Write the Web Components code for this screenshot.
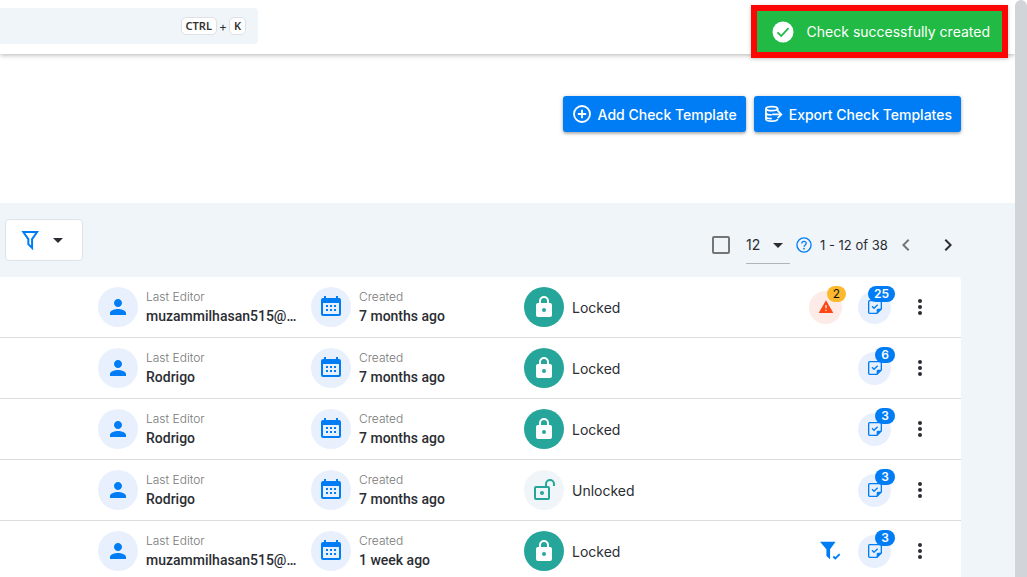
<!DOCTYPE html>
<html lang="en">
<head>
<meta charset="utf-8">
<title>Check Templates</title>
<style>
  html, body { margin: 0; height: 100%; }
  body {
    --blue: #007df5;
    --teal: #26a69a;
    --mist: #f0f5fa;
    --ink: #2b2d33;
    font-family: Inter, sans-serif;
    font-size: 14px;
    color: var(--ink);
    background: #fff;
    overflow: hidden;
  }
</style>
</head>
<body>
<check-app></check-app>

<script>
const ICONS = {
  plus: '<circle cx="12" cy="12" r="9.6" fill="none" stroke="currentColor" stroke-width="2.2"/><path d="M12 7v10M7 12h10" stroke="currentColor" stroke-width="2.2" fill="none"/>',
  export: '<g fill="none" stroke="currentColor" stroke-width="2.1"><ellipse cx="10.500" cy="5.500" rx="7" ry="2.500"/><path d="M3.500 5.500v5c0 1.400 3 2.500 7 2.500M3.500 10.500V15c0 1.400 3 2.500 7 2.500M3.500 15v3c0 1.400 3 2.500 7 2.500s7-1.100 7-2.500M17.500 5.500V8"/><path d="M11 12.500h11M17.500 8l4.500 4.500-4.500 4.500"/></g>',
  check: '<circle cx="12" cy="12" r="10.500" fill="#fff"/><path d="M6.500 12.300l3.700 3.700 7.300-7.800" fill="none" stroke="#21ba45" stroke-width="1.800"/>',
  funnel: '<path d="M4 2.500h16.500L14.500 11v10.500L10 17v-6z" fill="none" stroke="currentColor" stroke-width="2.400"/>',
  funnelCheck: '<path d="M0 2h17l-6 8V21l-4-3.500V10z" fill="currentColor"/><path d="M14.500 18l2.200 2.200L21.500 15.500" fill="none" stroke="currentColor" stroke-width="2"/>',
  caret: '<path d="M7 10l5 5 5-5z" fill="currentColor"/>',
  help: '<circle cx="12" cy="12" r="10.600" fill="none" stroke="currentColor" stroke-width="2"/><path d="M8.800 9.800c0-4.300 6.600-4 6.600-.3 0 2.500-3.300 2.500-3.300 5.200" fill="none" stroke="currentColor" stroke-width="2"/><circle cx="12.100" cy="17.600" r="1.300" fill="currentColor"/>',
  left: '<path d="M15.400 7.400L14 6l-6 6 6 6 1.400-1.400-4.600-4.600z" fill="currentColor"/>',
  right: '<path d="M10 6L8.600 7.400l4.600 4.600-4.600 4.600L10 18l6-6z" fill="currentColor"/>',
  person: '<path d="M12 12c2.200 0 4-1.800 4-4s-1.800-4-4-4-4 1.800-4 4 1.800 4 4 4zm0 2c-2.700 0-8 1.300-8 4v2h16v-2c0-2.700-5.300-4-8-4z" fill="currentColor"/>',
  calendar: '<path d="M5 3V1h2v2h10V1h2v2h1a2 2 0 0 1 2 2v14a2 2 0 0 1-2 2H4a2 2 0 0 1-2-2V5a2 2 0 0 1 2-2zM4 8v11h16V8z" fill="currentColor" fill-rule="evenodd"/><path d="M7 10h2v2H7zm4 0h2v2h-2zm4 0h2v2h-2zM7 14h2v2H7zm4 0h2v2h-2zm4 0h2v2h-2z" fill="currentColor"/>',
  lock: '<path d="M18 8h-1V6A5 5 0 0 0 7 6v2H6a2 2 0 0 0-2 2v10a2 2 0 0 0 2 2h12a2 2 0 0 0 2-2V10a2 2 0 0 0-2-2zM9 6a3 3 0 0 1 6 0v2H9zm3 11a2 2 0 1 1 0-4 2 2 0 0 1 0 4z" fill="currentColor" fill-rule="evenodd"/>',
  unlock: '<rect x="3" y="9" width="14" height="12" rx="1" fill="none" stroke="currentColor" stroke-width="2"/><path d="M14 9V6a4 4 0 0 1 8 0v2" fill="none" stroke="currentColor" stroke-width="2"/><circle cx="10" cy="15" r="2" fill="currentColor"/>',
  warning: '<path d="M1 21h22L12 2zm12-3h-2v-2h2zm0-4h-2v-5h2z" fill="currentColor" fill-rule="evenodd"/>',
  note: '<path d="M15 21.500H4a1.500 1.500 0 0 1-1.500-1.500V4A1.500 1.500 0 0 1 4 2.500h16A1.500 1.500 0 0 1 21.500 4v11z" fill="none" stroke="currentColor" stroke-width="2"/><path d="M14.500 22v-5.500a2 2 0 0 1 2-2H22z" fill="currentColor"/><path d="M7.500 11l3 3L16 8.500" fill="none" stroke="currentColor" stroke-width="2"/>',
  dots: '<g fill="currentColor"><circle cx="12" cy="4" r="2.700"/><circle cx="12" cy="12" r="2.700"/><circle cx="12" cy="20" r="2.700"/></g>'
};

class Base extends HTMLElement {
  connectedCallback() {
    if (this.shadowRoot) return;
    this.attachShadow({ mode: 'open' }).innerHTML =
      `<style>*{box-sizing:border-box}button,input,select{font:inherit;color:inherit;margin:0}button{cursor:pointer}${this.css()}</style>${this.html()}`;
  }
}
const define = (name, css, html) => customElements.define(name, class extends Base {
  css() { return css; }
  html() { return html(this); }
});
const attr = (el, name) => el.getAttribute(name) || '';

define('ui-icon',
  ':host{display:inline-flex;flex:none;width:var(--size,20px);height:var(--size,20px)}svg{width:100%;height:100%;display:block}',
  el => `<svg viewBox="0 0 24 24" aria-hidden="true">${ICONS[attr(el, 'name')]}</svg>`);

define('key-cap',
  `:host{display:block}
   kbd{display:block;padding:0 4px;border:1px solid #dfe1e4;border-radius:5px;background:#fff;
     font:600 11px/16px "Noto Sans",sans-serif;color:#333}`,
  () => '<kbd><slot></slot></kbd>');

define('search-header',
  `:host{display:block;padding:8px 0 10px;background:#fff;box-shadow:0 1px 5px rgba(0,0,0,.3);position:relative}
   label{display:flex;align-items:center;gap:2px;width:258px;height:36px;padding-right:12px;
     background:var(--mist);border-radius:0 4px 4px 0;font-size:12px}
   input{flex:1;min-width:0;height:100%;border:0;background:none;outline:0;padding:0 16px}`,
  () => `<label><input type="text" aria-label="Search"><key-cap>CTRL</key-cap><span>+</span><key-cap>K</key-cap></label>`);

define('action-button',
  `:host{display:block}
   button{display:flex;align-items:center;gap:6px;height:36px;padding:0 9px;border:0;border-radius:3px;
     background:var(--blue);color:#fff;font-size:14px;font-weight:500;white-space:nowrap;
     box-shadow:0 1px 4px rgba(0,0,0,.25),0 2px 2px rgba(0,0,0,.15)}`,
  el => `<button type="button"><ui-icon name="${attr(el, 'icon')}"></ui-icon><slot></slot></button>`);

define('list-toolbar',
  `:host{display:flex;align-items:center;justify-content:space-between;height:74px;padding:0 55px 0 5px}
   .filter{display:flex;align-items:center;justify-content:center;gap:6px;width:78px;height:42px;padding:0 0 0 2px;
     border:1px solid #dfe2e6;border-radius:4px;background:#fff}
   .filter ui-icon:first-child{color:var(--blue)}
   .pager{display:flex;align-items:center;padding-top:10px}
   .tick{appearance:none;width:18px;height:18px;border:2px solid #757575;border-radius:2px;margin-right:16px}
   .size{display:grid;align-items:center;width:44px;height:38px;border-bottom:1px solid #b0b5bb;margin-right:6px}
   .size>*{grid-area:1/1}
   select{appearance:none;border:0;background:none;padding:0;width:100%;height:100%;outline:0}
   .size ui-icon{justify-self:end;pointer-events:none}
   .help{color:var(--blue);margin-right:8px}
   .range{font-size:13px;width:74px;white-space:nowrap}
   .nav{display:flex;padding:0;border:0;background:none;margin-right:18px}
   .nav:disabled{color:#757575}
   .nav:last-child{margin-right:0}`,
  () => `<button class="filter" type="button" aria-label="Filter"><ui-icon name="funnel"></ui-icon><ui-icon name="caret" style="--size:24px"></ui-icon></button>
   <div class="pager">
     <input class="tick" type="checkbox" aria-label="Select all">
     <span class="size"><select aria-label="Rows per page"><option>12</option></select><ui-icon name="caret" style="--size:24px"></ui-icon></span>
     <ui-icon class="help" name="help" style="--size:16px"></ui-icon>
     <span class="range">1 - 12 of 38</span>
     <button class="nav" type="button" aria-label="Previous page" disabled><ui-icon name="left" style="--size:24px"></ui-icon></button>
     <button class="nav" type="button" aria-label="Next page"><ui-icon name="right" style="--size:24px"></ui-icon></button>
   </div>`);

define('info-cell',
  `:host{display:flex;align-items:center;gap:8px;min-width:0}
   .disc{display:grid;place-items:center;flex:none;width:40px;height:40px;border-radius:50%;
     background:#e9f0fd;color:var(--blue);--size:24px}
   .text{width:152px;min-width:0}
   .label{font-size:12px;line-height:18px;font-weight:300;color:#777}
   .value{font-family:Roboto,sans-serif;font-size:14px;line-height:20px;font-weight:500;overflow:hidden;text-overflow:ellipsis;white-space:nowrap}`,
  el => `<span class="disc"><ui-icon name="${attr(el, 'icon')}"></ui-icon></span>
   <div class="text"><div class="label">${attr(el, 'label')}</div><div class="value"><slot></slot></div></div>`);

define('lock-state',
  `:host{display:flex;align-items:center;gap:8px}
   .disc{display:grid;place-items:center;width:40px;height:40px;border-radius:50%;background:var(--teal);color:#fff;--size:24px}
   :host([open]) .disc{background:var(--mist);color:var(--teal)}`,
  el => `<span class="disc"><ui-icon name="${el.hasAttribute('open') ? 'unlock' : 'lock'}"></ui-icon></span>
   <span>${el.hasAttribute('open') ? 'Unlocked' : 'Locked'}</span>`);

define('count-icon',
  `:host{display:block}
   button{position:relative;display:grid;place-items:center;width:33px;height:33px;padding:0;border:0;border-radius:50%;
     background:#e9f0fd;color:var(--blue);--size:16px}
   .badge{position:absolute;top:-5px;right:-4px;min-width:19px;padding:0 6px;border-radius:8px;
     background:var(--blue);color:#fff;font-size:12px;line-height:16px;font-weight:600}
   :host([kind=warning]) button{background:#fdebe7;color:#ff4713}
   :host([kind=warning]) .badge{background:#fdb92e;color:#111;font-weight:400}`,
  el => `<button type="button"><ui-icon name="${attr(el, 'kind')}"></ui-icon><span class="badge"><slot></slot></span></button>`);

define('template-row',
  `:host{display:grid;grid-template-columns:205px 205px 1fr auto;column-gap:8px;align-items:center;
     height:61px;padding:0 28px 0 98px;box-sizing:border-box;background:#fff;border-bottom:1px solid #dcdcdc}
   :host(:first-of-type){border-top-right-radius:4px}
   .actions{display:flex;align-items:center;gap:16px}
   .filtered{color:var(--blue);--size:22px}
   .more{display:grid;place-items:center;width:26px;height:24px;padding:0;border:0;background:none;--size:18px}`,
  el => `<info-cell icon="person" label="Last Editor">${attr(el, 'editor')}</info-cell>
   <info-cell icon="calendar" label="Created">${attr(el, 'created')}</info-cell>
   <lock-state ${el.hasAttribute('unlocked') ? 'open' : ''}></lock-state>
   <div class="actions">
     ${el.hasAttribute('alerts') ? `<count-icon kind="warning">${attr(el, 'alerts')}</count-icon>` : ''}
     ${el.hasAttribute('filtered') ? '<ui-icon class="filtered" name="funnelCheck"></ui-icon>' : ''}
     <count-icon kind="note">${attr(el, 'checks')}</count-icon>
     <button class="more" type="button" aria-label="More"><ui-icon name="dots"></ui-icon></button>
   </div>`);

define('toast-message',
  `:host{position:absolute;top:5px;right:19px;display:flex;align-items:center;gap:12px;height:53px;
     padding:0 12px 0 14px;box-sizing:border-box;border:6px solid #fb0505;background:#21ba45;color:#fff;
     box-shadow:0 1px 4px rgba(0,0,0,.2);--size:24px;z-index:2}`,
  () => '<ui-icon name="check"></ui-icon><span role="status"><slot></slot></span>');

define('check-app',
  `:host{display:flex;height:100%;position:relative}
   .page{flex:1;min-width:0;display:flex;flex-direction:column;overflow:hidden}
   .actions{display:flex;justify-content:flex-end;gap:8px;padding:42px 54px 71px 0}
   main{flex:1;background:var(--mist)}
   .rows{margin-right:54px}
   .scroll{flex:none;width:12px;background:#d1d5da;border-radius:6px 6px 0 0}`,
  () => `<div class="page">
     <search-header></search-header>
     <div class="actions">
       <action-button icon="plus">Add Check Template</action-button>
       <action-button icon="export">Export Check Templates</action-button>
     </div>
     <main>
       <list-toolbar></list-toolbar>
       <div class="rows">
         <template-row editor="muzammilhasan515@gmail.com" created="7 months ago" alerts="2" checks="25"></template-row>
         <template-row editor="Rodrigo" created="7 months ago" checks="6"></template-row>
         <template-row editor="Rodrigo" created="7 months ago" checks="3"></template-row>
         <template-row editor="Rodrigo" created="7 months ago" unlocked checks="3"></template-row>
         <template-row editor="muzammilhasan515@gmail.com" created="1 week ago" filtered checks="3"></template-row>
       </div>
     </main>
   </div>
   <div class="scroll"></div>
   <toast-message>Check successfully created</toast-message>`);
</script>
</body>
</html>
